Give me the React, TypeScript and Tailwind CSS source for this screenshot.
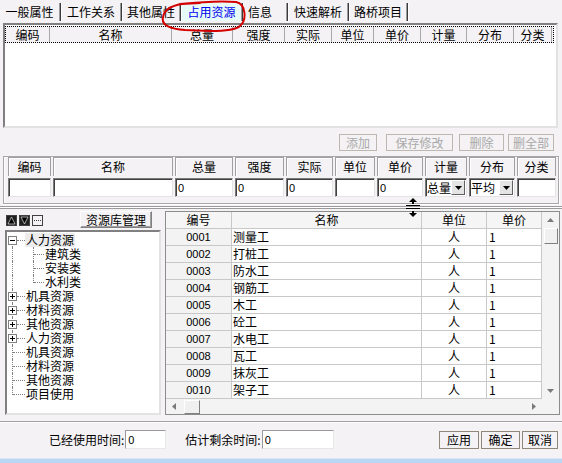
import React from 'react';

const tabs = [
  { label: '一般属性', cls: 'w-[59px] justify-center' },
  { label: '工作关系', cls: 'w-[58px] justify-center' },
  { label: '其他属性', cls: 'w-[56px] justify-center' },
  { label: '占用资源', cls: 'w-[59px] justify-center bg-[#e6fbf7] text-[#0000ee]' },
  { label: '信息', cls: 'w-[42px] justify-start pl-[4px]' },
  { label: '快速解析', cls: 'w-[58px] justify-center' },
  { label: '路桥项目', cls: 'w-[56px] justify-center' },
];

const topCols = [
  { label: '编码', w: 'w-[44px]' },
  { label: '名称', w: 'w-[122px]' },
  { label: '总量', w: 'w-[61px]' },
  { label: '强度', w: 'w-[52px]' },
  { label: '实际', w: 'w-[47px]' },
  { label: '单位', w: 'w-[42px]' },
  { label: '单价', w: 'w-[47px]' },
  { label: '计量', w: 'w-[46px]' },
  { label: '分布', w: 'w-[47px]' },
  { label: '分类', w: 'w-[38px]' },
];

type EntryCol = { label: string; w: string; value?: string; select?: string };

const entryCols: EntryCol[] = [
  { label: '编码', w: 'w-[43px]' },
  { label: '名称', w: 'w-[120px]' },
  { label: '总量', w: 'w-[58px]', value: '0' },
  { label: '强度', w: 'w-[49px]', value: '0' },
  { label: '实际', w: 'w-[47px]', value: '0' },
  { label: '单位', w: 'w-[40px]' },
  { label: '单价', w: 'w-[46px]', value: '0' },
  { label: '计量', w: 'w-[42px]', select: '总量' },
  { label: '分布', w: 'w-[46px]', select: '平均' },
  { label: '分类', w: 'w-[39px]' },
];

type TreeRow = {
  label: string;
  level: 0 | 1;
  box?: 'plus' | 'minus';
  first?: boolean;
  last?: boolean;
  lastChild?: boolean;
  selected?: boolean;
};

const treeRows: TreeRow[] = [
  { label: '人力资源', level: 0, box: 'minus', first: true, selected: true },
  { label: '建筑类', level: 1 },
  { label: '安装类', level: 1 },
  { label: '水利类', level: 1, lastChild: true },
  { label: '机具资源', level: 0, box: 'plus' },
  { label: '材料资源', level: 0, box: 'plus' },
  { label: '其他资源', level: 0, box: 'plus' },
  { label: '人力资源', level: 0, box: 'plus' },
  { label: '机具资源', level: 0 },
  { label: '材料资源', level: 0 },
  { label: '其他资源', level: 0 },
  { label: '项目使用', level: 0, last: true },
];

const workers = ['测量工', '打桩工', '防水工', '钢筋工', '木工', '砼工', '水电工', '瓦工', '抹灰工', '架子工'];

const raised =
  'border border-t-white border-l-white border-r-[#808080] border-b-[#808080] shadow-[1px_1px_0_#404040]';

function Tabs() {
  return (
    <div className="flex h-[22px] items-start pt-[3px]">
      {tabs.map((t) => (
        <React.Fragment key={t.label}>
          <div className={`flex h-[18px] items-center ${t.cls}`}>{t.label}</div>
          <div className="h-[18px] w-[3px] border-l border-r border-l-[#9a9a9a] border-r-white bg-[#3a3a3a]" />
        </React.Fragment>
      ))}
    </div>
  );
}

function TopGrid() {
  return (
    <div className="ml-[3px] mt-[1px] h-[105px] w-[555px] border-2 border-t-[#808080] border-l-[#808080] border-r-[#e2e2e2] border-b-[#e2e2e2] bg-white">
      <div className="mt-[1px] flex h-[17px] w-[549px] border border-dotted border-black bg-[#f4f2f4]">
        {topCols.map((c) => (
          <div key={c.label} className={`flex items-center justify-center border-r border-r-[#a8a8a8] ${c.w}`}>
            {c.label}
          </div>
        ))}
      </div>
    </div>
  );
}

function ActionButtons() {
  const btn = 'flex h-[17px] items-center justify-center border border-[#bcb8b0] text-[#a9a9a9]';
  return (
    <div className="mt-[6px] flex h-[17px] justify-end pr-[8px]">
      <div className={`${btn} w-[38px]`}>添加</div>
      <div className={`${btn} ml-[9px] w-[67px]`}>保存修改</div>
      <div className={`${btn} ml-[6px] w-[45px]`}>删除</div>
      <div className={`${btn} ml-[4px] w-[46px]`}>删全部</div>
    </div>
  );
}

function DropArrow() {
  return (
    <svg width="7" height="4" viewBox="0 0 7 4">
      <path d="M0 0 H7 L3.5 4 Z" fill="#000" />
    </svg>
  );
}

function EntryGroup() {
  return (
    <div className="mx-[3px] mt-[5px] h-[48px] border border-[#a8a8a8] pl-[4px] shadow-[inset_1px_1px_0_white,1px_1px_0_white]">
      <div className="flex gap-[2px]">
        {entryCols.map((c) => (
          <div key={c.label} className={`flex flex-col gap-[2px] ${c.w}`}>
            <div className="flex h-[19px] items-center justify-center border border-b-0 border-[#a0a0a0] shadow-[inset_1px_1px_0_white]">
              {c.label}
            </div>
            {c.select ? (
              <div className="flex h-[19px] items-center whitespace-nowrap border border-t-[#7a7a7a] border-l-[#7a7a7a] border-r-[#e4e4e4] border-b-[#e4e4e4] bg-white shadow-[inset_1px_1px_0_#404040]">
                <span className="min-w-0 flex-1 pl-[1px]">{c.select}</span>
                <span className="mr-[1px] flex h-[15px] w-[14px] shrink-0 items-center justify-center border border-t-white border-l-white border-r-[#606060] border-b-[#606060] bg-[#e4e4e4]">
                  <DropArrow />
                </span>
              </div>
            ) : (
              <div className="flex h-[19px] items-center border border-t-[#7a7a7a] border-l-[#7a7a7a] border-r-[#e4e4e4] border-b-[#e4e4e4] bg-white pl-[2px] font-['Liberation_Sans',sans-serif] text-[11px] shadow-[inset_1px_1px_0_#404040]">
                {c.value}
              </div>
            )}
          </div>
        ))}
      </div>
    </div>
  );
}

function Splitter() {
  return (
    <div className="relative h-[7px]">
      <div className="mt-[2px] h-[3px] border-y border-[#9a9a9a] bg-white" />
      <svg className="absolute left-[405px] top-[-6px]" width="16" height="20" viewBox="0 0 16 20">
        <path d="M8 0 L12 4 H9 V6 H7 V4 H4 Z" fill="#000" />
        <rect x="1" y="7" width="14" height="1" fill="#000" />
        <rect x="1" y="10" width="14" height="1" fill="#000" />
        <path d="M7 13 H9 V15 H12 L8 19 L4 15 H7 Z" fill="#000" />
      </svg>
    </div>
  );
}

function ToolIcon({ kind }: { kind: 'up' | 'down' | 'dots' }) {
  return (
    <svg width="11" height="11" viewBox="0 0 11 11">
      <rect x="0.5" y="0.5" width="10" height="10" fill={kind === 'dots' ? '#f4f2f4' : '#202020'} stroke="#404040" />
      {kind === 'up' && <path d="M5.5 2 L9 9 H2 Z" fill="#000" stroke="#fff" strokeWidth="0.6" />}
      {kind === 'down' && <path d="M2 2 H9 L5.5 9 Z" fill="#000" stroke="#fff" strokeWidth="0.6" />}
      {kind === 'dots' && <path d="M2 5.5 H9" stroke="#404040" strokeDasharray="1 1" />}
    </svg>
  );
}

function Tree() {
  return (
    <div className="ml-[5px] mt-[2px] h-[185px] w-[156px] border-2 border-t-[#808080] border-l-[#808080] border-r-[#e2e2e2] border-b-[#e2e2e2] bg-white pt-[1px]">
      {treeRows.map((r, i) => (
        <div key={i} className={`relative flex h-[14px] items-center ${r.level === 0 ? 'pl-[18px]' : 'pl-[37px]'}`}>
          <span
            className={`absolute left-[5px] border-l border-dotted border-[#808080] ${
              r.first ? 'top-[7px] bottom-0' : r.last ? 'top-0 h-[8px]' : 'top-0 bottom-0'
            }`}
          />
          {r.level === 0 && (
            <span
              className={`absolute top-[7px] border-t border-dotted border-[#808080] ${
                r.box ? 'left-[10px] w-[8px]' : 'left-[6px] w-[12px]'
              }`}
            />
          )}
          {r.box && (
            <span className="absolute left-[1px] top-[3px] h-[9px] w-[9px] border border-[#808080] bg-white">
              <span className="absolute left-[1px] top-[3px] h-[1px] w-[5px] bg-black" />
              {r.box === 'plus' && <span className="absolute left-[3px] top-[1px] h-[5px] w-[1px] bg-black" />}
            </span>
          )}
          {r.level === 1 && (
            <>
              <span
                className={`absolute left-[26px] top-0 border-l border-dotted border-[#808080] ${
                  r.lastChild ? 'h-[8px]' : 'bottom-0'
                }`}
              />
              <span className="absolute left-[27px] top-[7px] w-[10px] border-t border-dotted border-[#808080]" />
            </>
          )}
          <span className={`relative block h-[14px] px-[1px] leading-[14px] ${r.selected ? 'bg-[#ececec]' : ''}`}>
            {r.label}
          </span>
        </div>
      ))}
    </div>
  );
}

function LeftPanel() {
  return (
    <div className="flex w-[165px] flex-col">
      <div className="flex h-[17px] items-center">
        <div className="ml-[6px] flex gap-[2px] pt-[1px]">
          <ToolIcon kind="up" />
          <ToolIcon kind="down" />
          <ToolIcon kind="dots" />
        </div>
        <div className={`ml-[37px] flex h-[17px] w-[72px] items-center justify-center bg-[#f4f2f4] ${raised} shadow-[inset_-1px_-1px_0_#a0a0a0]`}>
          资源库管理
        </div>
      </div>
      <Tree />
    </div>
  );
}

function Tri({ dir }: { dir: 'up' | 'down' | 'left' | 'right' }) {
  const d = {
    up: 'M0 4 L3.5 0 L7 4 Z',
    down: 'M0 0 H7 L3.5 4 Z',
    left: 'M4 0 V7 L0 3.5 Z',
    right: 'M0 0 L4 3.5 L0 7 Z',
  }[dir];
  const vertical = dir === 'up' || dir === 'down';
  return (
    <svg width={vertical ? 7 : 4} height={vertical ? 4 : 7} viewBox={vertical ? '0 0 7 4' : '0 0 4 7'}>
      <path d={d} fill="#7a7a7a" />
    </svg>
  );
}

function ResourceGrid() {
  const cell = 'flex items-center border-r border-[#c8c8c8]';
  return (
    <div className="flex h-[204px] w-[395px] flex-col border border-[#8c8c8c] bg-white">
      <div className="flex h-[187px]">
        <div className="flex w-[376px] flex-col">
          <div className="flex h-[17px] border-b border-[#c8c8c8] bg-[#f5f5f5]">
            <div className={`${cell} w-[66px] justify-center`}>编号</div>
            <div className={`${cell} w-[190px] justify-center`}>名称</div>
            <div className={`${cell} w-[65px] justify-center`}>单位</div>
            <div className={`${cell} w-[55px] justify-center`}>单价</div>
          </div>
          {workers.map((w, i) => (
            <div key={w} className="flex h-[17px] border-b border-[#c8c8c8]">
              <div className={`${cell} w-[66px] justify-center bg-[#f3f3f3] font-['Liberation_Sans',sans-serif] text-[11px]`}>
                {String(i + 1).padStart(4, '0')}
              </div>
              <div className={`${cell} w-[190px] pl-[1px]`}>{w}</div>
              <div className={`${cell} w-[65px] justify-center`}>人</div>
              <div className={`${cell} w-[55px] pl-[2px]`}>1</div>
            </div>
          ))}
        </div>
        <div className="flex w-[17px] flex-col items-center bg-[#f3f3f3]">
          <div className="flex h-[16px] items-center justify-center">
            <Tri dir="up" />
          </div>
          <div className={`h-[16px] w-[14px] bg-[#f0f0f0] ${raised} shadow-none`} />
          <div className="flex-1" />
          <div className="flex h-[16px] items-center justify-center">
            <Tri dir="down" />
          </div>
        </div>
      </div>
      <div className="flex h-[15px]">
        <div className="flex w-[376px] items-center bg-[#f3f3f3]">
          <div className="flex w-[16px] justify-center">
            <Tri dir="left" />
          </div>
          <div className={`ml-[2px] h-[14px] w-[16px] bg-[#f0f0f0] ${raised} shadow-none`} />
          <div className="flex-1" />
          <div className="flex w-[16px] justify-center">
            <Tri dir="right" />
          </div>
        </div>
        <div className="w-[17px] bg-[#f3f3f3]" />
      </div>
    </div>
  );
}

function BottomBar() {
  const input =
    'flex h-[19px] items-center border border-t-[#9a9a9a] border-l-[#9a9a9a] border-r-[#e8e8e8] border-b-[#e8e8e8] bg-white pl-[2px] font-["Liberation_Sans",sans-serif] text-[11px]';
  const btn = 'flex h-[18px] items-center justify-center border border-[#8f877a] bg-[#f4f2f4]';
  return (
    <>
      <div className="mt-[6px] h-[2px] border-t border-[#a0a0a0] border-b border-b-white" />
      <div className="mt-[7px] flex h-[19px] items-center">
        <span className="ml-[49px]">已经使用时间:</span>
        <div className={`${input} ml-[1px] w-[41px]`}>0</div>
        <span className="ml-[19px]">估计剩余时间:</span>
        <div className={`${input} ml-[1px] w-[72px]`}>0</div>
        <div className="ml-auto mr-[4px] flex gap-[2px]">
          <div className={`${btn} w-[40px]`}>应用</div>
          <div className={`${btn} w-[39px]`}>确定</div>
          <div className={`${btn} w-[36px]`}>取消</div>
        </div>
      </div>
    </>
  );
}

export default function App() {
  return (
    <div className="relative flex h-[463px] w-[562px] flex-col overflow-hidden bg-[#f4f2f4] font-['Noto_Sans_CJK_SC','Liberation_Sans',sans-serif] text-[12px] leading-[14px] text-black">
      <Tabs />
      <TopGrid />
      <ActionButtons />
      <EntryGroup />
      <Splitter />
      <div className="flex h-[204px]">
        <LeftPanel />
        <ResourceGrid />
      </div>
      <BottomBar />
      <div className="mt-auto h-[5px] border-t border-[#d8e8f7] bg-[#b9d7f2]" />
      <svg className="absolute left-[158px] top-0" width="92" height="36" viewBox="158 0 92 36" fill="none">
        <path
          d="M180 4 C200 2 225 1 236 2 C246 4 247 20 240 26 C236 30 225 31 210 31 L185 30 C170 29 161 25 163 17 C164 11 170 6 182 4 L200 3"
          stroke="#d40000"
          strokeWidth="2"
          strokeLinecap="round"
        />
      </svg>
    </div>
  );
}
